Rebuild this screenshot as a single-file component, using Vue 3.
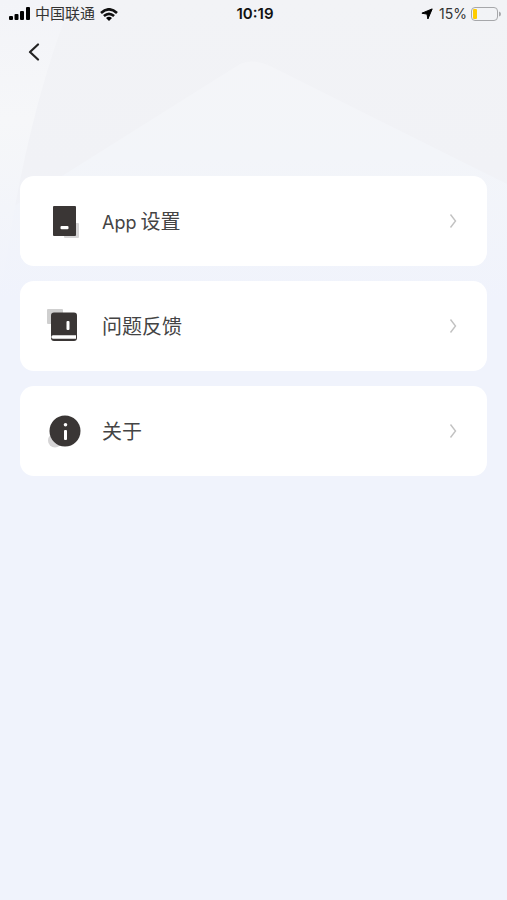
<template>
  <div class="page">
    <svg
      class="backdrop"
      viewBox="0 0 507 300"
      preserveAspectRatio="none"
      aria-hidden="true"
    >
      <defs>
        <linearGradient id="sky" x1="0" y1="0" x2="0" y2="1">
          <stop offset="0" stop-color="#f2f3f6" />
          <stop offset="0.55" stop-color="#f1f2f6" />
          <stop offset="1" stop-color="#f0f3fc" />
        </linearGradient>
        <linearGradient id="hill" x1="0" y1="0" x2="0" y2="1">
          <stop offset="0" stop-color="#f4f5f8" />
          <stop offset="0.4" stop-color="#f3f5f9" />
          <stop offset="1" stop-color="#f0f3fc" />
        </linearGradient>
        <linearGradient id="beam" x1="0" y1="0" x2="0" y2="1">
          <stop offset="0" stop-color="#f3f4f8" />
          <stop offset="0.4" stop-color="#f6f7f9" />
          <stop offset="0.7" stop-color="#f3f5fa" />
          <stop offset="1" stop-color="#f0f3fc" />
        </linearGradient>
      </defs>
      <rect width="507" height="300" fill="url(#sky)" />
      <path d="M240 64Q253 58 270 66L507 184V300H0V215Z" fill="url(#hill)" />
      <path d="M0 0H72Q36 90 14 212L0 300Z" fill="url(#beam)" />
    </svg>

    <header class="status-bar">
      <div class="status-left">
        <svg class="signal" viewBox="0 0 22 14" aria-hidden="true">
          <rect x="0" y="9" width="4" height="4" rx="1" />
          <rect x="5.5" y="7" width="4" height="6" rx="1" />
          <rect x="11" y="4" width="4" height="9" rx="1" />
          <rect x="17" y="0" width="4" height="13" rx="1" />
        </svg>
        <span class="carrier">中国联通</span>
        <svg class="wifi" viewBox="0 0 18 13" aria-hidden="true">
          <path
            d="M1 5Q9-2.4 17 5M3.9 8Q9 3.6 14.1 8"
            fill="none"
            stroke="#111"
            stroke-width="2.6"
          />
          <path d="M6 10Q9 7.6 12 10L9 13Z" />
        </svg>
      </div>
      <time class="clock">10:19</time>
      <div class="status-right">
        <svg class="location" viewBox="0 0 12 12" aria-hidden="true">
          <path
            d="M11.2 0.9L6.9 11L6 6.1L0.9 5.2Z"
            stroke="#000"
            stroke-width="1"
            stroke-linejoin="round"
          />
        </svg>
        <span class="percent">15%</span>
        <svg class="battery" viewBox="0 0 30 14" aria-hidden="true">
          <rect
            x="0.5"
            y="0.5"
            width="26"
            height="13"
            rx="3.5"
            fill="none"
            stroke="#a6a7aa"
          />
          <rect x="2" y="2" width="4" height="10" rx="1" fill="#fc0" />
          <path d="M28 4.5Q30 5 30 7Q30 9 28 9.5Z" fill="#a6a7aa" />
        </svg>
      </div>
    </header>

    <nav class="nav-bar">
      <button class="back" type="button" aria-label="返回">
        <svg viewBox="0 0 12 18" aria-hidden="true">
          <path
            d="M10 1.5L2 9L10 16.5"
            fill="none"
            stroke="#222"
            stroke-width="2.2"
            stroke-linecap="round"
            stroke-linejoin="round"
          />
        </svg>
      </button>
    </nav>

    <main class="menu">
      <button
        v-for="item in items"
        :key="item.icon"
        class="menu-item"
        type="button"
      >
        <svg class="item-icon" viewBox="0 0 36 36" aria-hidden="true">
          <template v-if="item.icon === 'settings'">
            <rect x="17" y="20" width="15" height="15" rx="1" fill="#d6d5d6" />
            <rect x="6" y="3" width="23" height="30" rx="1" fill="#3a3635" />
            <rect x="13.5" y="23" width="8" height="3.2" rx="1" fill="#fff" />
          </template>
          <template v-else-if="item.icon === 'feedback'">
            <rect x="0" y="1" width="16" height="15" rx="1" fill="#cfcfcf" />
            <rect x="4" y="4.5" width="26" height="28.5" rx="3" fill="#3a3635" />
            <rect x="19.5" y="13" width="3" height="9" rx="1" fill="#fff" />
            <path d="M6 27.3H29V30.7H6A1.7 1.7 0 0 1 6 27.3Z" fill="#fff" />
          </template>
          <template v-else>
            <circle cx="8" cy="27.5" r="7" fill="#d6d5d6" />
            <circle cx="18" cy="18" r="15.5" fill="#3a3635" />
            <circle cx="18.5" cy="11.7" r="1.8" fill="#fff" />
            <rect x="17" y="17" width="3" height="10" rx="1" fill="#fff" />
          </template>
        </svg>
        <span class="item-label">
          <span v-if="item.prefix" class="latin">{{ item.prefix }}</span>
          <span>{{ item.label }}</span>
        </span>
        <svg class="arrow" viewBox="0 0 8 16" aria-hidden="true">
          <path
            d="M1.5 1.5L6.5 8L1.5 14.5"
            fill="none"
            stroke="#c2c2c2"
            stroke-width="1.4"
          />
        </svg>
      </button>
    </main>
  </div>
</template>

<script setup>
const items = [
  { icon: "settings", prefix: "App", label: "设置" },
  { icon: "feedback", label: "问题反馈" },
  { icon: "about", label: "关于" },
];
</script>

<style>
body {
  background-color: #f0f3fc;
}
</style>

<style scoped>
* {
  box-sizing: border-box;
}

.page {
  position: relative;
  min-height: 100vh;
  background-color: #f0f3fc;
  font-family: Inter, "Noto Sans CJK SC", sans-serif;
  color: #111;
}

.backdrop {
  position: absolute;
  top: 0;
  left: 0;
  width: 100%;
  height: 300px;
}

.status-bar {
  position: relative;
  display: grid;
  grid-template-columns: 1fr auto 1fr;
  align-items: center;
  height: 28px;
  padding: 0 6px 0 9px;
  font-size: 15px;
  line-height: 28px;
}

.status-left,
.status-right {
  display: flex;
  align-items: center;
}

.status-right {
  justify-content: flex-end;
}

.signal {
  width: 22px;
  height: 14px;
}

.carrier {
  margin: 0 5px 0 4px;
  color: #333;
}

.wifi {
  width: 18px;
  height: 13px;
}

.clock {
  font-weight: 600;
}

.location {
  width: 12px;
  height: 12px;
  margin-right: 6px;
}

.percent {
  color: #333;
  font-size: 14px;
}

.battery {
  width: 30px;
  height: 14px;
  margin-left: 4px;
}

.nav-bar {
  position: relative;
  display: flex;
  align-items: center;
  height: 48px;
  padding: 0 18px;
}

.back {
  display: flex;
  align-items: center;
  justify-content: center;
  width: 32px;
  height: 32px;
  padding: 0;
  border: none;
  background: none;
  cursor: pointer;
}

.back svg {
  width: 12px;
  height: 18px;
}

.menu {
  position: relative;
  display: flex;
  flex-direction: column;
  gap: 15px;
  padding: 100px 20px 20px;
}

.menu-item {
  display: flex;
  align-items: center;
  height: 90px;
  padding: 0 30px 0 27px;
  border: none;
  border-radius: 14px;
  background-color: #fff;
  color: #444;
  font-family: inherit;
  font-size: 20px;
  line-height: 28px;
  text-align: left;
  cursor: pointer;
}

.item-icon {
  width: 36px;
  height: 36px;
  margin-right: 19px;
}

.item-label {
  display: flex;
  flex: 1;
  align-items: baseline;
  gap: 4px;
  padding-top: 2px;
}

.latin {
  font-size: 18px;
}

.arrow {
  width: 8px;
  height: 16px;
}
</style>
